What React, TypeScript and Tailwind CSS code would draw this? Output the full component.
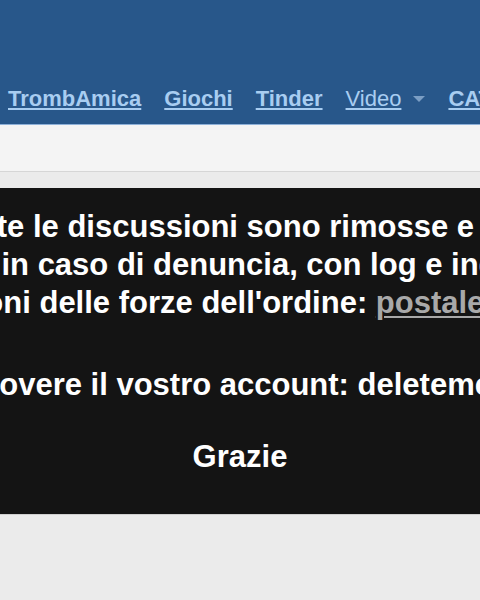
const navLinks = ['TrombAmica', 'Giochi', 'Tinder'];

export default function App() {
  return (
    <div className="min-h-screen bg-[#ebebeb] font-['Liberation_Sans',Arial,sans-serif] overflow-hidden">
      {/* header */}
      <header className="bg-[#28578a] border-b border-[#8db0d8] pt-[87px] pb-[13px]">
        <nav className="flex items-center gap-[23px] pl-[8px] whitespace-nowrap text-[22px] leading-[24px]">
          {navLinks.map((l) => (
            <a key={l} href="#" className="font-bold text-[#a8cdf1] underline decoration-2 underline-offset-[2px]">
              {l}
            </a>
          ))}
          <span className="flex items-center gap-[12px]">
            <a href="#" className="text-[#a8cdf1] underline decoration-[1.5px] underline-offset-[2px]">
              Video
            </a>
            <span className="w-0 h-0 border-l-[6px] border-r-[6px] border-t-[6px] border-l-transparent border-r-transparent border-t-[#7b9ec4]" />
          </span>
          <a href="#" className="font-bold text-[#a8cdf1] underline decoration-2 underline-offset-[2px]">
            CATEGORIE
          </a>
        </nav>
      </header>

      <div className="h-[47px] bg-[#f4f4f4] border-b border-[#d6d6d6]" />
      <div className="h-[16px]" />

      {/* avviso */}
      <section className="bg-[#141414] border-b border-[#cfcfcf] pt-[20px] pb-[38px] text-white font-bold text-[31px] leading-[38px] flex flex-col items-center whitespace-nowrap">
        <p>Tutte le discussioni sono rimosse e poi</p>
        <p>salvate in caso di denuncia, con log e indirizzi e</p>
        <p>
          dati a disposizioni delle forze dell'ordine:{' '}
          <a href="#" className="text-[#a9a9a9] underline decoration-2 underline-offset-[3px]">
            postale@trombamica.it
          </a>
        </p>
        <p className="mt-[44px]">Se vorreste rimuovere il vostro account: deleteme@trombamica.it</p>
        <p className="mt-[34px]">Grazie</p>
      </section>
    </div>
  );
}
